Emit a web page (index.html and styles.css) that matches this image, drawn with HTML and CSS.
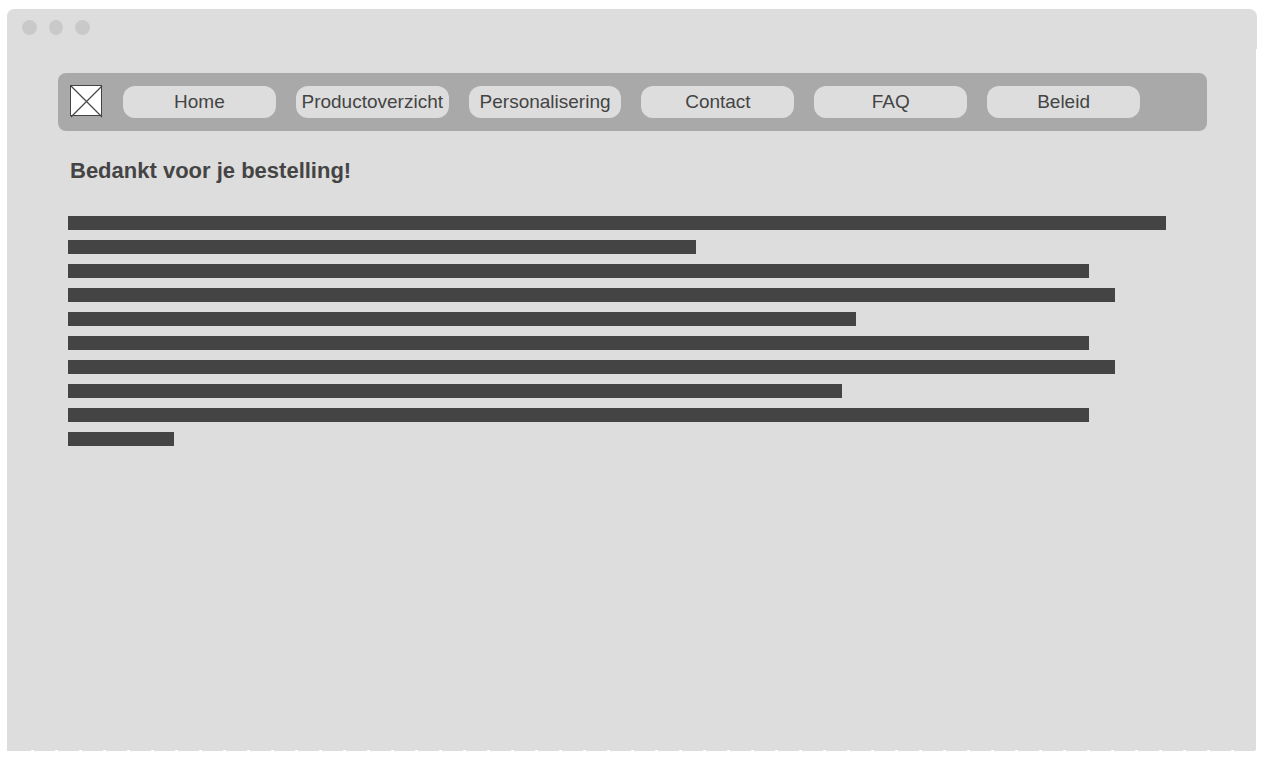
FILE: index.html
```html
<!DOCTYPE html>
<html lang="nl">
<head>
<meta charset="utf-8">
<meta name="viewport" content="width=device-width, initial-scale=1">
<title>Bedankt voor je bestelling!</title>
<link rel="stylesheet" href="styles.css">
</head>
<body>
<div class="window">
  <div class="titlebar">
    <svg width="69" height="15" viewBox="0 0 69 15" fill="#c9c9c9" aria-hidden="true">
      <circle cx="7.5" cy="7.5" r="7.5"/>
      <ellipse cx="34" cy="7.5" rx="7" ry="7.5"/>
      <circle cx="60.5" cy="7.5" r="7.5"/>
    </svg>
  </div>
  <nav class="nav">
    <svg class="logo" width="33" height="33" viewBox="0 0 33 33" aria-hidden="true">
      <rect x=".5" y=".5" width="31" height="30" fill="#fff" stroke="#444"/>
      <path d="M1 1 32 32M32 1 1 32" fill="none" stroke="#444" stroke-width="1.2"/>
    </svg>
    <div class="links">
      <a href="#home">Home</a>
      <a href="#productoverzicht">Productoverzicht</a>
      <a href="#personalisering">Personalisering</a>
      <a href="#contact">Contact</a>
      <a href="#faq">FAQ</a>
      <a href="#beleid">Beleid</a>
    </div>
  </nav>
  <main class="content">
    <h1>Bedankt voor je bestelling!</h1>
    <div class="lines">
      <div class="line" style="width:100%"></div>
      <div class="line" style="width:57.2%"></div>
      <div class="line" style="width:93%"></div>
      <div class="line" style="width:95.36%"></div>
      <div class="line" style="width:71.77%"></div>
      <div class="line" style="width:93%"></div>
      <div class="line" style="width:95.36%"></div>
      <div class="line" style="width:70.5%"></div>
      <div class="line" style="width:93%"></div>
      <div class="line" style="width:9.65%"></div>
    </div>
  </main>
  <div class="edge"></div>
</div>
</body>
</html>
```

FILE: styles.css
```css
* { box-sizing: border-box; }

body {
  margin: 0;
  padding: 9px 8px 7px 7px;
  min-height: 100vh;
  display: flex;
  background: #fff;
  color: #444;
  font-family: "Liberation Sans", Arial, sans-serif;
}

.window {
  flex: 1;
  display: flex;
  flex-direction: column;
  background: #ddd;
  border-radius: 8px 8px 0 0;
}

.titlebar {
  height: 40px;
  margin-right: -1px;
  padding: 11px 15px;
  background: #ddd;
  border-radius: 8px 8px 0 0;
}

.titlebar svg { display: block; }

.nav {
  display: flex;
  align-items: flex-start;
  gap: 20px;
  margin: 24px 49px 0 51px;
  padding: 12px 67px 12px 12px;
  background: #a9a9a9;
  border-radius: 8px;
}

.logo { flex: none; }

.links {
  flex: 1;
  display: grid;
  grid-template-columns: repeat(6, minmax(0, 1fr));
  gap: 20px;
  margin: 1px 0;
}

.links a {
  background: #ddd;
  border-radius: 12px;
  color: #444;
  font-size: 19px;
  line-height: 32px;
  text-align: center;
  text-decoration: none;
  white-space: nowrap;
}

.content {
  flex: 1;
  padding: 26px 90px 0 61px;
}

h1 {
  margin: 0 0 31px;
  padding-left: 2px;
  font-size: 22px;
  line-height: 28px;
}

.lines {
  display: grid;
  gap: 10px;
}

.line {
  height: 14px;
  background: #444;
}

.edge {
  height: 1px;
  margin-left: 3px;
  background: repeating-linear-gradient(90deg, transparent 0 21px, #fff 21px 24px);
}
```
